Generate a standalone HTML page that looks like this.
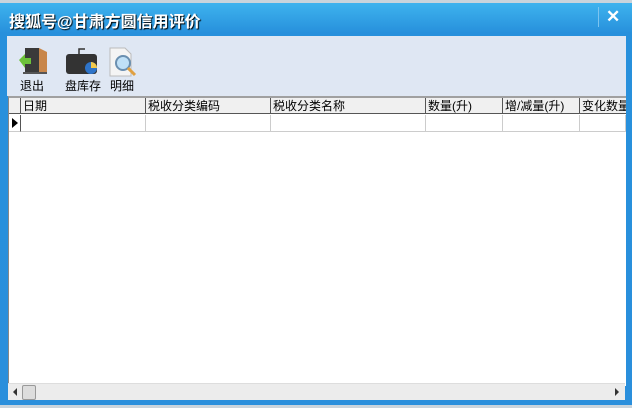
<!DOCTYPE html><html><head><style>
body{margin:0;width:632px;height:408px;overflow:hidden;background:#8aa;font-family:"Liberation Sans","Noto Sans CJK SC",sans-serif;position:relative}
.win{position:absolute;left:0;top:3px;width:632px;height:402px;background:linear-gradient(#3eb3ee,#2790dc 30px,#2a8fdc);}
.title{position:absolute;left:9px;top:5px;color:#fff;font-size:16px;font-weight:bold;text-shadow:1px 1px 1px #000}
.x{position:absolute;left:606px;top:4px;color:#fff;font-size:17px;font-weight:bold}
.tb{position:absolute;left:7px;top:36px;width:619px;height:60px;background:#dfe7f3}
.lbl{position:absolute;top:77px;font-size:12px;color:#000}
.grid{position:absolute;left:8px;top:96px;width:617px;height:288px;background:#fff;border-top:2px solid #a0a0a0;border-left:1px solid #888}
.hd{position:absolute;top:0;height:16px;background:#f0f0f0;border-right:1px solid #555;border-bottom:1px solid #555;font-size:12px;line-height:16px;padding-left:2px;box-sizing:border-box;overflow:hidden;white-space:nowrap}
.cell{position:absolute;top:17px;height:17px;border-right:1px solid #ccc;border-bottom:1px solid #ccc;box-sizing:border-box}
.sb{position:absolute;left:8px;top:383px;width:617px;height:16px;background:#ececec;border-top:1px solid #ddd}
.bot{position:absolute;left:7px;top:399px;width:619px;height:2px;background:#fff}
</style></head><body>
<div style="position:absolute;left:0;top:0;width:632px;height:3px;background:#c9d4dc"></div>
<div class="win">
<div class="title">搜狐号@甘肃方圆信用评价</div>
<div style="position:absolute;left:598px;top:4px;width:1px;height:20px;background:#7cc4f0"></div>
<div class="x">✕</div>
</div>
<div class="tb">
<svg style="position:absolute;left:10px;top:10px" width="32" height="30"><rect x="8" y="2" width="14" height="26" fill="#3a3a3a"/><polygon points="22,2 30,6 30,28 22,28" fill="#c8864a"/><polygon points="2,14 8,8 8,12 14,12 14,18 8,18 8,22" fill="#6cc23a"/><rect x="6" y="26" width="24" height="2" fill="#555"/></svg>
<svg style="position:absolute;left:58px;top:10px" width="34" height="30"><rect x="1" y="8" width="31" height="20" rx="3" fill="#333"/><path d="M14 8 V3 H20" stroke="#333" fill="none" stroke-width="1.5"/><circle cx="26" cy="22" r="6" fill="#2e74c9"/><path d="M26 22 V16 A6 6 0 0 1 32 22Z" fill="#f2c94c"/></svg>
<svg style="position:absolute;left:100px;top:10px" width="34" height="32"><path d="M3 2 H18 L24 8 V30 H3Z" fill="#f4f4f4" stroke="#bbb"/><circle cx="16" cy="17" r="7" fill="#bfe0f7" stroke="#6a8fb0" stroke-width="2"/><path d="M21 22 L28 29" stroke="#e0a040" stroke-width="3"/></svg>
</div>
<div class="lbl" style="left:20px">退出</div>
<div class="lbl" style="left:65px">盘库存</div>
<div class="lbl" style="left:110px">明细</div>
<div class="grid">
<div class="hd" style="left:0;width:12px"></div>
<div class="hd" style="left:12px;width:125px">日期</div>
<div class="hd" style="left:137px;width:125px">税收分类编码</div>
<div class="hd" style="left:262px;width:155px">税收分类名称</div>
<div class="hd" style="left:417px;width:77px">数量(升)</div>
<div class="hd" style="left:494px;width:77px">增/减量(升)</div>
<div class="hd" style="left:571px;width:46px;border-right:none">变化数量</div>
<div class="cell" style="left:0;width:12px;border-right:1px solid #555"><svg width="10" height="16"><polygon points="3,3 9,8 3,13" fill="#000"/></svg></div>
<div class="cell" style="left:12px;width:125px"></div>
<div class="cell" style="left:137px;width:125px"></div>
<div class="cell" style="left:262px;width:155px"></div>
<div class="cell" style="left:417px;width:77px"></div>
<div class="cell" style="left:494px;width:77px"></div>
<div class="cell" style="left:571px;width:46px"></div>
</div>
<div class="sb">
<svg style="position:absolute;left:4px;top:4px" width="6" height="8"><polygon points="5,0 1,4 5,8" fill="#333"/></svg>
<div style="position:absolute;left:14px;top:1px;width:12px;height:13px;background:#ddd;border:1px solid #999;border-radius:2px"></div>
<svg style="position:absolute;left:606px;top:4px" width="6" height="8"><polygon points="1,0 5,4 1,8" fill="#333"/></svg>
</div>
<div style="position:absolute;left:0;top:405px;width:632px;height:3px;background:#c9d4dc"></div>
</body></html>
